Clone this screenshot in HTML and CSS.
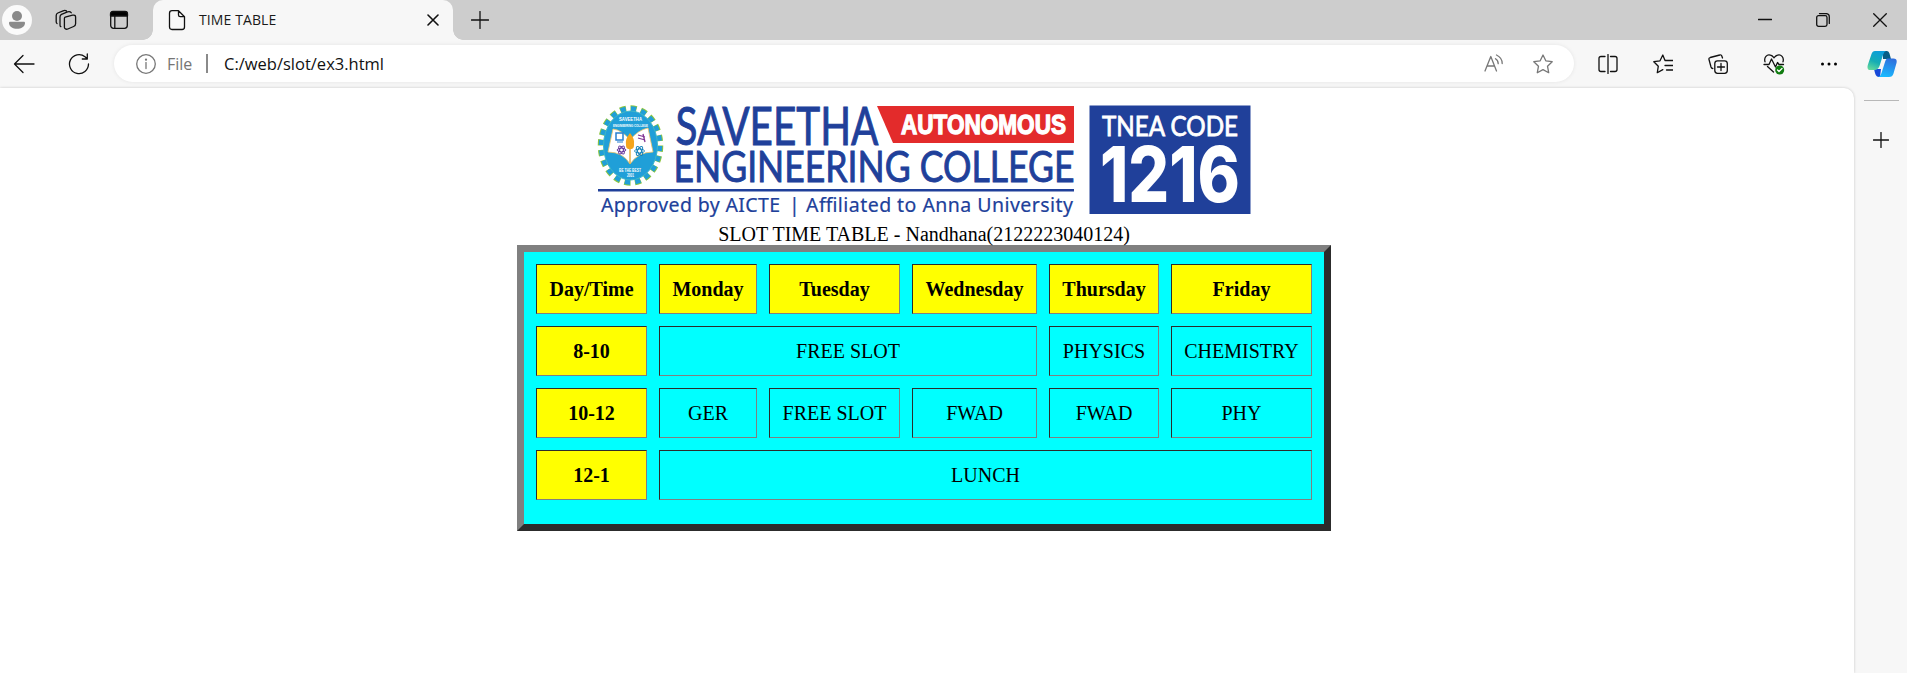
FILE: index.html
```
<!DOCTYPE html>
<html lang="en">
<head>
<meta charset="utf-8">
<title>TIME TABLE</title>
<link rel="stylesheet" href="styles.css">
</head>
<body>
<header class="tabbar">
  <span class="profile"><svg width="30" height="30" viewBox="0 0 30 30"><circle cx="15" cy="15" r="15" fill="#fafafa"/><circle cx="15" cy="11" r="5" fill="#8a8a8a"/><path d="M8 16.8h14q1 0 1 1c0 4-4 6-8 6s-8-2-8-6q0-1 1-1z" fill="#8a8a8a"/></svg></span>
  <span class="slot workspaces"><svg class="icon" width="24" height="24" viewBox="0 0 24 24"><path d="m11.2 9.1 7.4-1.9c1.8-.4 3 .3 3 1.7v6.800c0 1.700-.7 2.300-2 2.800l-5.800 2.500c-1.700.7-3.400-.3-3.400-1.800v-8.600q0-1.200.8-1.500z"/><path d="M6.800 18.600q-.8-.4-.8-1.700V9c0-1.400.4-2 1.500-2.600l6-2.500c1.500-.5 2.900-.2 3.700.8M3 15.500q-.8-.6-.8-1.800V7.600c0-1.400.5-2.100 1.600-2.600l5.300-2.200c1.400-.5 2.300-.5 3.300.1"/></svg></span>
  <span class="slot tabactions"><svg class="icon" width="20" height="20" viewBox="0 0 20 20"><rect x="1.700" y="1.700" width="16.600" height="16.600" rx="2.800"/><path d="M1.500 6V4q0-2.500 2.500-2.500h12q2.500 0 2.500 2.500V6z" fill="#000"/><path d="M5.800 6v12"/></svg></span>
  <div class="tab">
    <svg class="icon" width="18" height="22" viewBox="0 0 18 22"><path d="M4 1.700h6.500l6 6V18q0 2.500-2.500 2.500H4Q1.500 20.500 1.500 18V4.200Q1.500 1.700 4 1.700zM10.500 1.700V6q0 1.700 1.700 1.700h4.300"/></svg>
    <span class="tab-title">TIME TABLE</span>
    <svg class="icon tab-close" width="12" height="12" viewBox="0 0 12 12"><path d="m1 1 10 10M11 1 1 11"/></svg>
  </div>
  <svg class="icon new-tab" width="18" height="18" viewBox="0 0 18 18"><path d="M9 .5v17M.5 9h17"/></svg>
  <div class="window">
    <svg class="icon" width="14" height="14" viewBox="0 0 14 14"><path d="M.5 6.500h13"/></svg>
    <svg class="icon" width="14" height="14" viewBox="0 0 14 14"><rect x=".7" y="2.700" width="10.300" height="10.600" rx="1.800"/><path d="M3.500.6H10q3.300 0 3.300 3.300v6.500"/></svg>
    <svg class="icon" width="14" height="14" viewBox="0 0 14 14"><path d="m.7.700 12.600 12.600M13.300.7.700 13.300"/></svg>
  </div>
</header>
<nav class="toolbar">
  <span class="back"><svg class="icon" width="22" height="20" viewBox="0 0 22 20"><path d="M21 10H1.500M10 1.500 1.500 10l8.500 8.500"/></svg></span>
  <span class="reload"><svg class="icon" width="22" height="22" viewBox="0 0 22 22"><path d="M20.500 11A9.500 9.500 0 1 1 17 3.700l2.200 2M19.300 1v5h-5"/></svg></span>
  <div class="address">
    <svg class="icon muted" width="20" height="20" viewBox="0 0 20 20"><circle cx="10" cy="10" r="9.300"/><path d="M10 8.600v6"/><circle cx="10" cy="5.700" r=".5"/></svg>
    <span class="scheme">File</span>
    <span class="divider"></span>
    <span class="url">C:/web/slot/ex3.html</span>
    <svg class="icon muted read" width="20" height="20" viewBox="0 0 20 20"><path d="m1 17 5.800-14.500L12.500 17M3.300 12h7M11.500 4.700q2.700 1.700 2.700 5M12.500 1q5.700 2.700 5.700 8.500"/></svg>
    <svg class="icon muted star" width="20" height="20" viewBox="0 0 20 20"><path d="m10 1 2.800 5.800 6.400.9-4.700 4.500 1.200 6.500L10 15.600l-5.700 3.100 1.200-6.500L.8 7.700l6.400-.9z"/></svg>
  </div>
  <div class="actions">
    <svg class="icon" width="20" height="20" viewBox="0 0 20 20"><path d="M7 2.500H3Q1 2.500 1 4.500v11q0 2 2 2h4M12.500 2.500H17q2 0 2 2v11q0 2-2 2h-4.500M10 .5v19"/></svg>
    <svg class="icon" width="20" height="20" viewBox="0 0 20 20"><path d="M12 6.600 9.800 1 7 6.800l-6.200.9 4.500 4.500-1 6.500 5.500-3.100M12.500 6.500h7.500M12 11.500h8M13.500 16h6.500"/></svg>
    <svg class="icon" width="20" height="20" viewBox="0 0 20 20"><rect x="6.800" y="6.800" width="12.500" height="12.500" rx="2.700"/><path d="M13 9.500v7M9.500 13h7M14.500 4l-.7-2q-.5-1.500-2-1L2.200 3.500q-1.600.5-1.200 2l2 7.500q.5 1.500 1.800 1.500"/></svg>
    <svg class="icon" width="22" height="22" viewBox="0 0 22 22"><path d="M2 8.800c-1.300-4.500 2-7.800 5.500-6.600 2 .6 2.600 1.600 3.500 2.600 1-1 1.500-2 3.500-2.600C18 1 21.300 4.300 20 8.800M4.500 13.500l6 5.500M1 11.500h5L8.500 6l4 8 2-4.500 1.500 2h4.500"/><circle cx="16.700" cy="17" r="4.500" fill="#107c10" stroke="none"/><path d="m14.500 17 1.500 1.500 3-3" stroke="#fff"/></svg>
    <svg width="18" height="20" viewBox="0 0 18 20"><circle cx="2.500" cy="10" r="1.500"/><circle cx="9" cy="10" r="1.500"/><circle cx="15.500" cy="10" r="1.500"/></svg>
  </div>
  <svg class="copilot" width="30" height="28" viewBox="0 0 30 28">
    <defs>
      <linearGradient id="left" x1=".6" y1="0" x2=".2" y2="1"><stop offset="0" stop-color="#0b9ddb"/><stop offset=".55" stop-color="#16adb4"/><stop offset="1" stop-color="#62d99d"/></linearGradient>
      <linearGradient id="right" x1=".7" y1="0" x2=".4" y2="1"><stop offset="0" stop-color="#2f6edc"/><stop offset="1" stop-color="#19baff"/></linearGradient>
    </defs>
    <path d="M16 1h4q2 0 2.500 2.500L24 9h-8z" fill="#075e86"/>
    <path d="M7 19h7l-1 8h-1q-3 0-4-4z" fill="#1748d8"/>
    <path d="M8 1h11q-2 .5-3 4l-3.500 11q-1.500 4-5 4H3.500q-4 0-2.700-5L4.500 4Q5.500 1 8 1z" fill="url(#left)"/>
    <path d="M20.500 8.500h6q4 0 3 4.500l-3 10.500q-1 3.500-4.500 3.500H11q2.500-.5 3.500-4L18 12q1-3.500 2.500-3.500z" fill="url(#right)"/>
  </svg>
</nav>
<div class="body">
  <main class="page">
    <svg class="logo" width="660" height="120" viewBox="594 98 660 120">
      <ellipse cx="630.500" cy="145.500" rx="29.500" ry="37" fill="none" stroke="#8ac43f" stroke-width="6.500" pathLength="200" stroke-dasharray="5.800 4.200"/>
      <ellipse cx="630.500" cy="145.500" rx="29" ry="36.500" fill="none" stroke="#209fd8" stroke-width="5.400" pathLength="200" stroke-dasharray="5 5" stroke-dashoffset="-.4"/>
      <ellipse cx="630.500" cy="145.500" rx="27" ry="34.500" fill="#209fd8" stroke="#3fb6c8"/>
      <path d="M613 129q9 1 17 11 8-10 18-12l5 24q-15 0-23 12-7-12-22-12z" fill="#fff" stroke="#f1c76b" stroke-width=".8"/>
      <path d="M630 140v24" stroke="#e6ae43" stroke-width="1.500"/>
      <path d="M630 133c5 7 4 8 4 12s-2 4-4 4-4 0-4-4-1-5 4-12z" fill="#f5a51b"/>
      <rect x="616" y="133" width="7" height="7" fill="none" stroke="#267fd0" stroke-width="1.500"/><path d="M617 142h6" stroke="#267fd0"/>
      <path d="m638 135 7 2M638 138l7 2M643 134l2 8" stroke="#813393" stroke-width="1.300"/>
      <g fill="none" stroke="#6b3ea0"><ellipse cx="621.500" cy="150" rx="4.500" ry="1.800"/><ellipse cx="621.500" cy="150" rx="4.500" ry="1.800" transform="rotate(60 621.500 150)"/><ellipse cx="621.500" cy="150" rx="4.500" ry="1.800" transform="rotate(120 621.500 150)"/></g>
      <g fill="none" stroke="#1683bb"><ellipse cx="639.500" cy="151" rx="5" ry="2"/><ellipse cx="639.500" cy="151" rx="5" ry="2" transform="rotate(60 639.500 151)"/><ellipse cx="639.500" cy="151" rx="5" ry="2" transform="rotate(120 639.500 151)"/></g>
      <g class="seal" fill="#fff"><text x="619" y="120.500" textLength="23" lengthAdjust="spacingAndGlyphs">SAVEETHA</text><text x="613" y="126.500" font-size="4" textLength="35" lengthAdjust="spacingAndGlyphs">ENGINEERING COLLEGE</text><text x="619" y="171.500" textLength="22" lengthAdjust="spacingAndGlyphs">BE THE BEST</text><text x="627" y="177" textLength="7" lengthAdjust="spacingAndGlyphs">2001</text></g>
      <g class="name">
        <text x="675.500" y="144.500" font-size="53" textLength="203" lengthAdjust="spacingAndGlyphs">SAVEETHA</text>
        <text x="673.500" y="182" font-size="42" textLength="401" lengthAdjust="spacingAndGlyphs">ENGINEERING COLLEGE</text>
      </g>
      <path d="M877 106h197v37H893z" fill="#e32b2b"/>
      <text class="autonomous" x="901" y="133.500" textLength="165" lengthAdjust="spacingAndGlyphs">AUTONOMOUS</text>
      <path d="M598 190.300h476" stroke="#20409a" stroke-width="2.400"/>
      <g class="approved">
        <text x="601" y="211.700" textLength="179" lengthAdjust="spacing">Approved by AICTE</text>
        <text x="789" y="211.700">|</text>
        <text x="806" y="211.700" textLength="267" lengthAdjust="spacing">Affiliated to Anna University</text>
      </g>
      <path d="M1089.500 105.500h161v108.500h-161z" fill="#20409a"/>
      <text class="tnea" x="1102" y="135.500" textLength="136" lengthAdjust="spacingAndGlyphs">TNEA CODE</text>
      <text class="code" x="1100" y="201.500" textLength="140" lengthAdjust="spacingAndGlyphs">1216</text>
    </svg>
    <table class="timetable">
      <caption>SLOT TIME TABLE - Nandhana(2122223040124)</caption>
      <colgroup><col class="c-time"><col class="c-mon"><col class="c-tue"><col class="c-wed"><col class="c-thu"><col class="c-fri"></colgroup>
      <tbody>
      <tr><th>Day/Time</th><th>Monday</th><th>Tuesday</th><th>Wednesday</th><th>Thursday</th><th>Friday</th></tr>
      <tr><th>8-10</th><td colspan="3">FREE SLOT</td><td>PHYSICS</td><td>CHEMISTRY</td></tr>
      <tr><th>10-12</th><td>GER</td><td>FREE SLOT</td><td>FWAD</td><td>FWAD</td><td>PHY</td></tr>
      <tr><th>12-1</th><td colspan="5">LUNCH</td></tr>
      <tr class="empty"></tr>
      </tbody>
    </table>
  </main>
  <aside class="sidebar">
    <span class="rule"></span>
    <svg class="icon" width="16" height="16" viewBox="0 0 16 16"><path d="M8 .5v15M.5 8h15"/></svg>
  </aside>
</div>
</body>
</html>
```
FILE: styles.css
```
* { box-sizing: border-box; }
body {
  margin: 0;
  width: 1907px;
  height: 673px;
  overflow: hidden;
  display: flex;
  flex-direction: column;
  background: #f7f7f7;
  font-family: "Open Sans", "Noto Sans", sans-serif;
}
svg { display: block; flex: none; }
.icon { fill: none; stroke: #111; stroke-width: 1.3; stroke-linecap: round; stroke-linejoin: round; }
.muted { stroke: #777; }

.tabbar { display: flex; align-items: center; height: 40px; background: #cdcdcd; flex: none; }
.profile { padding-left: 2px; }
.slot { display: flex; justify-content: center; }
.workspaces { margin-left: 22px; width: 24px; }
.tabactions { margin-left: 31px; width: 20px; }
.tab {
  position: relative;
  display: flex;
  align-items: center;
  width: 300px;
  height: 40px;
  margin-left: 24px;
  padding: 0 14px 0 15px;
  border-radius: 10px 10px 0 0;
  background: #f7f7f7;
}
.tab::before, .tab::after {
  content: "";
  position: absolute;
  bottom: 0;
  width: 10px;
  height: 10px;
}
.tab::before { left: -10px; background: radial-gradient(circle at 0 0, #cdcdcd 9.5px, #f7f7f7 10px); }
.tab::after { right: -10px; background: radial-gradient(circle at 100% 0, #cdcdcd 9.5px, #f7f7f7 10px); }
.tab-title { margin-left: 13px; font-size: 14px; line-height: 38px; letter-spacing: .1px; color: #1a1a1a; }
.tab-close { margin-left: auto; stroke-width: 1.6; }
.new-tab { margin-left: 18px; }
.window { display: flex; gap: 43.5px; margin-left: auto; margin-right: 20px; }

.toolbar { display: flex; align-items: center; height: 47px; flex: none; }
.back { padding-left: 13px; }
.reload { margin-left: 33px; }
.address {
  display: flex;
  align-items: center;
  width: 1460px;
  height: 37px;
  margin-left: 24px;
  padding: 0 21px 0 22px;
  border-radius: 19px;
  background: #fff;
  box-shadow: 0 0 4px rgba(0, 0, 0, .08);
}
.scheme { margin-left: 11px; width: 28px; font-size: 16px; color: #757575; }
.divider { width: 2px; height: 19px; margin-left: 11px; background: #8a8a8a; }
.url { margin-left: 16px; font-size: 16.5px; color: #111; }
.read { margin-left: auto; }
.star { margin-left: 29px; }
.actions { display: flex; align-items: center; gap: 35px; margin-left: 24px; }
.copilot { margin-left: auto; margin-right: 10px; }

.body { display: flex; flex: 1; }
.page {
  display: flex;
  flex-direction: column;
  align-items: center;
  width: 1854px;
  margin-top: 1px;
  padding: 10px 6px 0 0;
  border-radius: 0 10px 0 0;
  background: #fff;
  box-shadow: 0 0 3px rgba(0, 0, 0, .2);
}
.sidebar { flex: 1; display: flex; flex-direction: column; align-items: center; padding: 13px 0 0 1px; }
.rule { width: 35px; height: 1px; background: #b8b8b8; margin-bottom: 31px; }

.logo { overflow: visible; }
.name { font-family: Lato, sans-serif; fill: #20409a; stroke: #20409a; stroke-width: .9px; }
.seal { font: bold 4.5px "Liberation Sans", sans-serif; }
.autonomous { font: bold 27px "Liberation Sans", sans-serif; fill: #fff; stroke: #fff; stroke-width: 1.3px; }
.approved { font: 19.5px "Noto Sans", sans-serif; fill: #20409a; stroke: #20409a; stroke-width: .2px; }
.tnea { font: 26px Lato, sans-serif; fill: #fff; stroke: #fff; stroke-width: .8px; }
.code { font: 800 77px Inter, sans-serif; fill: #fff; }

.timetable {
  width: 814px;
  height: 286px;
  margin-top: 5px;
  table-layout: fixed;
  border: 7px solid;
  border-color: #808080 #2c2c2c #2c2c2c #808080;
  border-spacing: 12px;
  background: #0ff;
  color: #000;
  font: 20px "Liberation Serif", serif;
}
.timetable caption { height: 22px; line-height: 22px; white-space: nowrap; }
.timetable th, .timetable td {
  height: 50px;
  padding: 1px 0 0;
  text-align: center;
  border: 1px solid;
  border-color: #2c2c2c #808080 #808080 #2c2c2c;
}
.timetable th { background: #ff0; }
.timetable .empty { height: 0; }
.c-time { width: 111px; }
.c-mon { width: 98px; }
.c-tue { width: 131px; }
.c-wed { width: 125px; }
.c-thu { width: 110px; }
.c-fri { width: 141px; }
```
